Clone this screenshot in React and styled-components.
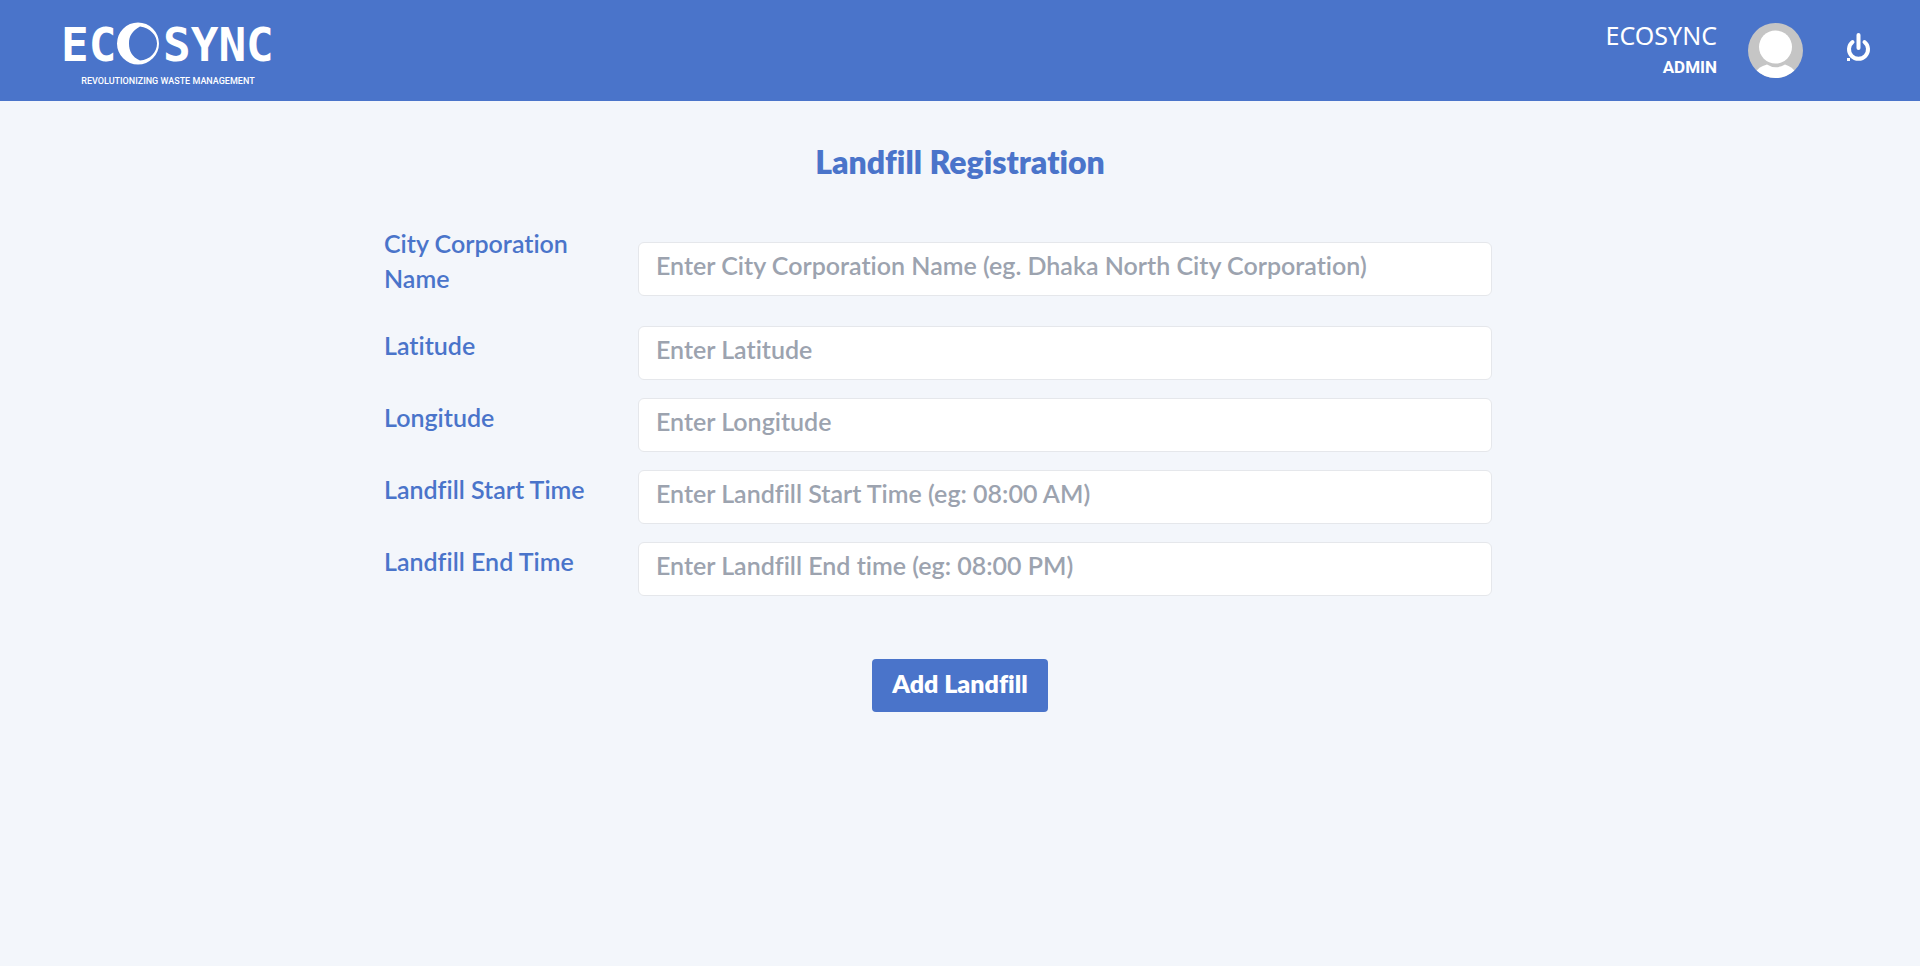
import React from "react";
import styled, { createGlobalStyle } from "styled-components";

const blue = "#4a74ca";

const GlobalStyle = createGlobalStyle`
  *, *::before, *::after { box-sizing: border-box; }
  body {
    margin: 0;
    min-height: 100vh;
    background: #f3f6fb;
    font-family: Lato, "Open Sans", sans-serif;
    font-variant-ligatures: none;
  }
`;

const Header = styled.header`
  display: flex;
  align-items: center;
  justify-content: space-between;
  height: 101px;
  padding: 0 48px 0 60px;
  background: ${blue};
  color: #fff;
`;

const Logo = styled.a`
  display: block;
  color: #fff;
  text-decoration: none;
`;

const LogoArt = styled.svg`
  display: block;
  overflow: visible;
`;

const Wordmark = styled.text`
  font-family: "DejaVu Sans Mono", monospace;
  font-size: 46px;
  font-weight: 700;
`;

const Tagline = styled.text`
  font-family: Roboto, sans-serif;
  font-size: 9px;
  font-weight: 500;
`;

const Account = styled.div`
  display: flex;
  align-items: center;
`;

const Identity = styled.div`
  display: flex;
  flex-direction: column;
  align-items: flex-end;
`;

const UserName = styled.span`
  font-family: "Noto Sans", sans-serif;
  font-size: 25px;
  line-height: 32px;
`;

const Role = styled.span`
  font-family: Roboto, sans-serif;
  font-size: 17px;
  line-height: 32px;
  font-weight: 700;
`;

const Avatar = styled.svg`
  display: block;
  margin-left: 31px;
`;

const PowerButton = styled.button`
  display: flex;
  margin-left: 42px;
  padding: 0 0 6px;
  border: 0;
  background: none;
  color: inherit;
  cursor: pointer;
`;

const Main = styled.main`
  display: flex;
  flex-direction: column;
  align-items: center;
  padding-top: 43px;
`;

const Title = styled.h1`
  margin: 0;
  font-size: 32px;
  line-height: 36px;
  font-weight: 800;
  color: ${blue};
`;

const Form = styled.form`
  display: flex;
  flex-direction: column;
  width: 60%;
  margin-top: 46px;
  padding-right: 44px;
`;

const Field = styled.div`
  display: grid;
  grid-template-columns: 214px 1fr;
  column-gap: 40px;
  align-items: center;
  margin-bottom: 18px;

  &:first-child { margin-bottom: 14px; }
`;

const Label = styled.label`
  padding-bottom: 16px;
  font-size: 25px;
  line-height: 35px;
  font-weight: 600;
  color: ${blue};
`;

const Input = styled.input`
  width: 100%;
  height: 54px;
  padding: 0 17px 8px;
  border: 1px solid #e5e7eb;
  border-radius: 6px;
  background: #fff;
  color: #1f2937;
  font-family: inherit;
  font-size: 25px;
  font-weight: 600;
  font-variant-ligatures: none;

  &::placeholder { color: #9ca3af; opacity: 1; }
`;

const Submit = styled.button`
  align-self: center;
  height: 53px;
  margin: 45px -44px 0 0;
  padding: 0 20px 6px;
  border: 0;
  border-radius: 4px;
  background: ${blue};
  color: #fff;
  font-family: inherit;
  font-size: 25px;
  font-weight: 800;
  font-variant-ligatures: none;
  cursor: pointer;
`;

const fields = [
  { id: "city", label: "City Corporation Name", hint: "Enter City Corporation Name (eg. Dhaka North City Corporation)" },
  { id: "latitude", label: "Latitude", hint: "Enter Latitude" },
  { id: "longitude", label: "Longitude", hint: "Enter Longitude" },
  { id: "start", label: "Landfill Start Time", hint: "Enter Landfill Start Time (eg: 08:00 AM)" },
  { id: "end", label: "Landfill End Time", hint: "Enter Landfill End time (eg: 08:00 PM)" },
];

function EcoSyncLogo() {
  return (
    <LogoArt width="216" height="66" viewBox="0 0 216 66" fill="currentColor">
      <Wordmark x="1" y="43">EC</Wordmark>
      <path fillRule="evenodd" d="M78 4.500a21 21 0 1 0 0 42a21 21 0 1 0 0-42ZM80 8.500C90 10 97 17 97 25.500S90 42 80 42.500C72 39 69 33 69 25.500S72 13 80 8.500Z" />
      <Wordmark x="103" y="43">SYNC</Wordmark>
      <Tagline x="108" y="66" textAnchor="middle">REVOLUTIONIZING WASTE MANAGEMENT</Tagline>
    </LogoArt>
  );
}

export default function App() {
  return (
    <>
      <GlobalStyle />
      <Header>
        <Logo href="#"><EcoSyncLogo /></Logo>
        <Account>
          <Identity>
            <UserName>ECOSYNC</UserName>
            <Role>ADMIN</Role>
          </Identity>
          <Avatar width="55" height="55" viewBox="0 0 55 55" aria-label="Profile picture">
            <defs>
              <clipPath id="avatar-disc"><circle cx="27.5" cy="27.5" r="27.5" /></clipPath>
            </defs>
            <g clipPath="url(#avatar-disc)">
              <rect width="55" height="55" fill="#c5c5c5" />
              <path d="M7 50C9 46 13 43 19 41.500Q27.500 47 37 41.500C42 43 46 46 48 50V56H7Z" fill="#fff" />
              <circle cx="27.500" cy="24" r="16.500" fill="#fff" />
            </g>
          </Avatar>
          <PowerButton type="button" aria-label="Log out">
            <svg width="27" height="32" viewBox="0 0 27 32" fill="none" stroke="currentColor" strokeLinecap="round">
              <path d="M13.500 3V16" strokeWidth="4" />
              <path d="M7.500 10a9.500 9.500 0 1 0 12 0" strokeWidth="4" />
              <rect x="2" y="26" width="3" height="3" fill="currentColor" stroke="none" />
            </svg>
          </PowerButton>
        </Account>
      </Header>
      <Main>
        <Title>Landfill Registration</Title>
        <Form>
          {fields.map((f) => (
            <Field key={f.id}>
              <Label htmlFor={f.id}>{f.label}</Label>
              <Input id={f.id} type="text" placeholder={f.hint} />
            </Field>
          ))}
          <Submit type="submit">Add Landfill</Submit>
        </Form>
      </Main>
    </>
  );
}
